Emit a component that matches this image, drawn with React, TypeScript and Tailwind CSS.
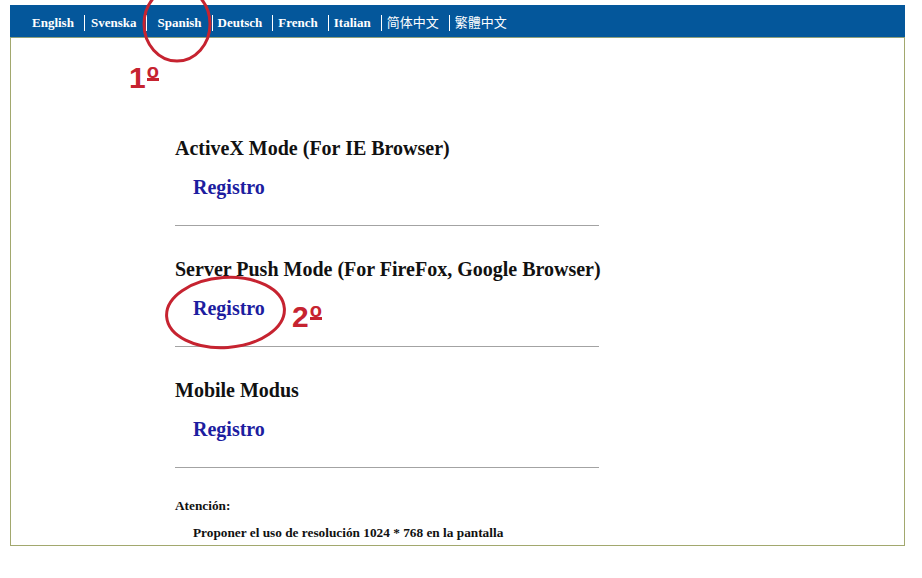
import React from 'react';

const serif = { fontFamily: '"Liberation Serif", "Times New Roman", "Noto Sans CJK SC", serif' };
const marker = { fontFamily: '"Liberation Sans", Arial, sans-serif' };

const languages = [
  { label: 'English', pad: 'pl-0' },
  { label: 'Svenska', pad: 'pl-[6px]' },
  { label: 'Spanish', pad: 'pl-[10px]' },
  { label: 'Deutsch', pad: 'pl-[5px]' },
  { label: 'French', pad: 'pl-[5px]' },
  { label: 'Italian', pad: 'pl-[5px]' },
  { label: '简体中文', pad: 'pl-[5px]', cjk: true },
  { label: '繁體中文', pad: 'pl-[5px]', cjk: true },
];

const modes = [
  'ActiveX Mode (For IE Browser)',
  'Server Push Mode (For FireFox, Google Browser)',
  'Mobile Modus',
];

function Mode({ title, first }: { title: string; first?: boolean }) {
  return (
    <div className={first ? 'pt-[99px]' : 'pt-[32px]'}>
      <h2 className="text-[20px] leading-[23px] font-bold text-[#111]">{title}</h2>
      <a href="#" className="block mt-[16px] ml-[18px] text-[20px] leading-[23px] font-bold text-[#1d1da0]">
        Registro
      </a>
      <div className="mt-[26px] w-[424px] border-t border-[#a3a3a3]" />
    </div>
  );
}

// "1º" style markers drawn on top of the page
function Step({ n, className }: { n: string; className: string }) {
  return (
    <span className={`absolute flex items-start font-bold text-[#c62330] ${className}`} style={marker}>
      <span className="text-[30px] leading-[28px]">{n}</span>
      <span className="ml-[1px] mt-[1px] text-[20px] leading-[13px] border-b-[3px] border-[#c62330]">o</span>
    </span>
  );
}

export default function App() {
  return (
    <div className="relative w-[922px] h-[578px] bg-white overflow-hidden" style={serif}>
      <div className="pt-[5px] pl-[10px]">
        <div className="w-[895px] h-[541px] border-x border-b border-[#a2a86e]">
          {/* language bar */}
          <div className="h-[33px] -mx-px bg-[#04579b] border-b border-[#8fa07a] flex items-center pt-[3px] pl-[22px]">
            {languages.map((l, i) => (
              <a
                key={l.label}
                href="#"
                className={`text-white text-[13px] leading-[16px] ${l.cjk ? 'font-normal' : 'font-bold'} ${
                  i > 0 ? `ml-[10px] border-l border-white ${l.pad}` : ''
                }`}
              >
                {l.label}
              </a>
            ))}
          </div>

          <div className="pl-[164px]">
            {modes.map((m, i) => (
              <Mode key={m} title={m} first={i === 0} />
            ))}
            <p className="mt-[30px] text-[13.3px] leading-[15px] font-bold text-[#111]">Atención:</p>
            <p className="mt-[12px] ml-[18px] text-[13.3px] leading-[15px] font-bold text-[#111]">
              Proponer el uso de resolución 1024 * 768 en la pantalla
            </p>
          </div>
        </div>
      </div>

      {/* red markup over the page */}
      <svg className="absolute left-0 top-0 pointer-events-none" width="922" height="578">
        <ellipse cx="177" cy="24" rx="33" ry="37" fill="none" stroke="#c62330" strokeWidth="3" />
        <ellipse
          cx="225.5"
          cy="312.5"
          rx="59"
          ry="35"
          fill="none"
          stroke="#c62330"
          strokeWidth="3"
          transform="rotate(-4 225.5 312.5)"
        />
      </svg>
      <Step n="1" className="left-[129px] top-[64px]" />
      <Step n="2" className="left-[292px] top-[303px]" />
    </div>
  );
}
